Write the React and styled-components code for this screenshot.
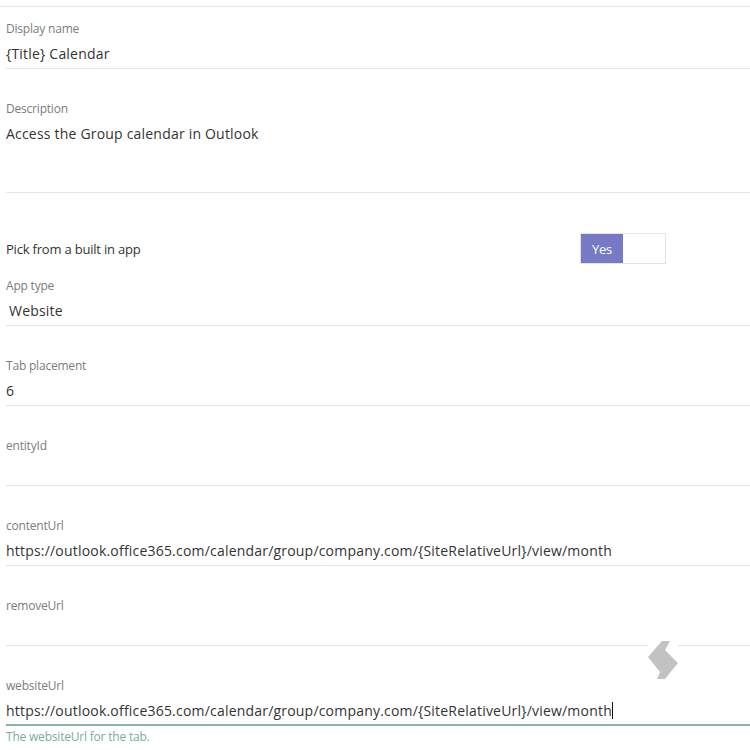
import React from "react";
import styled, { createGlobalStyle } from "styled-components";

const GlobalStyle = createGlobalStyle`
    html, body {
        margin: 0;
        padding: 0;
        background: #fff;
    }

    body {
        font-family: "Open Sans", "Noto Sans", sans-serif;
        color: #333;
    }
`;

const Form = styled.div`
    width: 750px;
    padding: 6px 0 0 6px;
    box-sizing: border-box;
`;

const TopRule = styled.div`
    border-top: 1px solid #e6e6e6;
    margin-left: -6px;
`;

const Field = styled.div`
    position: relative;
    margin-top: ${props => props.gap ?? 32}px;
`;

const Label = styled.div`
    font-size: 12px;
    line-height: 16px;
    height: 16px;
    color: #7c7c7c;
    letter-spacing: -0.2px;
`;

const Value = styled.div`
    height: ${props => props.tall ? 76 : 32}px;
    box-sizing: border-box;
    padding-top: 7px;
    padding-left: ${props => props.indent ? 3 : 0}px;
    font-size: 14px;
    line-height: 20px;
    color: #333;
    white-space: nowrap;
    letter-spacing: 0.2px;
    border-bottom: ${props => props.focused ? "2px solid #86b5ad" : "1px solid #e6e6e6"};
`;

const Caret = styled.span`
    display: inline-block;
    width: 1px;
    height: 17px;
    background: #111;
    vertical-align: -3px;
`;

const Hint = styled.div`
    margin-top: 3px;
    font-size: 12px;
    line-height: 16px;
    color: #79aba1;
    letter-spacing: -0.2px;
`;

const SwitchRow = styled.div`
    display: flex;
    align-items: center;
    justify-content: space-between;
    margin-top: 40px;
    padding-right: 84px;
    height: 31px;
    font-size: 13px;
    color: #333;
    letter-spacing: -0.2px;
`;

const Toggle = styled.div`
    display: flex;
    width: 86px;
    height: 31px;
    box-sizing: border-box;
    border: 1px solid #e2e2e2;
    background: #fff;
`;

const ToggleOn = styled.div`
    width: 42px;
    display: flex;
    align-items: center;
    justify-content: center;
    background: #767ac4;
    color: #fff;
    font-size: 13px;
`;

const Grip = styled.svg`
    position: absolute;
    right: 72px;
    top: 43px;
    background: #fff;
`;

const url = "https://outlook.office365.com/calendar/group/company.com/{SiteRelativeUrl}/view/month";

const App = () => (
    <>
        <GlobalStyle />
        <Form>
            <TopRule />
            <Field gap={14}>
                <Label>Display name</Label>
                <Value>{"{Title} Calendar"}</Value>
            </Field>
            <Field>
                <Label>Description</Label>
                <Value tall>Access the Group calendar in Outlook</Value>
            </Field>
            <SwitchRow>
                <span>Pick from a built in app</span>
                <Toggle>
                    <ToggleOn>Yes</ToggleOn>
                </Toggle>
            </SwitchRow>
            <Field gap={14}>
                <Label>App type</Label>
                <Value indent>Website</Value>
            </Field>
            <Field>
                <Label>Tab placement</Label>
                <Value>6</Value>
            </Field>
            <Field>
                <Label>entityId</Label>
                <Value />
            </Field>
            <Field>
                <Label>contentUrl</Label>
                <Value>{url}</Value>
            </Field>
            <Field>
                <Label>removeUrl</Label>
                <Value />
                {/* drag handle sitting on the field's rule */}
                <Grip width="30" height="39" viewBox="0 0 30 39">
                    <polygon
                        points="14,0 22,0 17,9 30,22 17,38 9,38 12,31 0,16"
                        fill="#c2c2c2"
                    />
                </Grip>
            </Field>
            <Field>
                <Label>websiteUrl</Label>
                <Value focused>{url}<Caret /></Value>
                <Hint>The websiteUrl for the tab.</Hint>
            </Field>
        </Form>
    </>
);

export default App;
